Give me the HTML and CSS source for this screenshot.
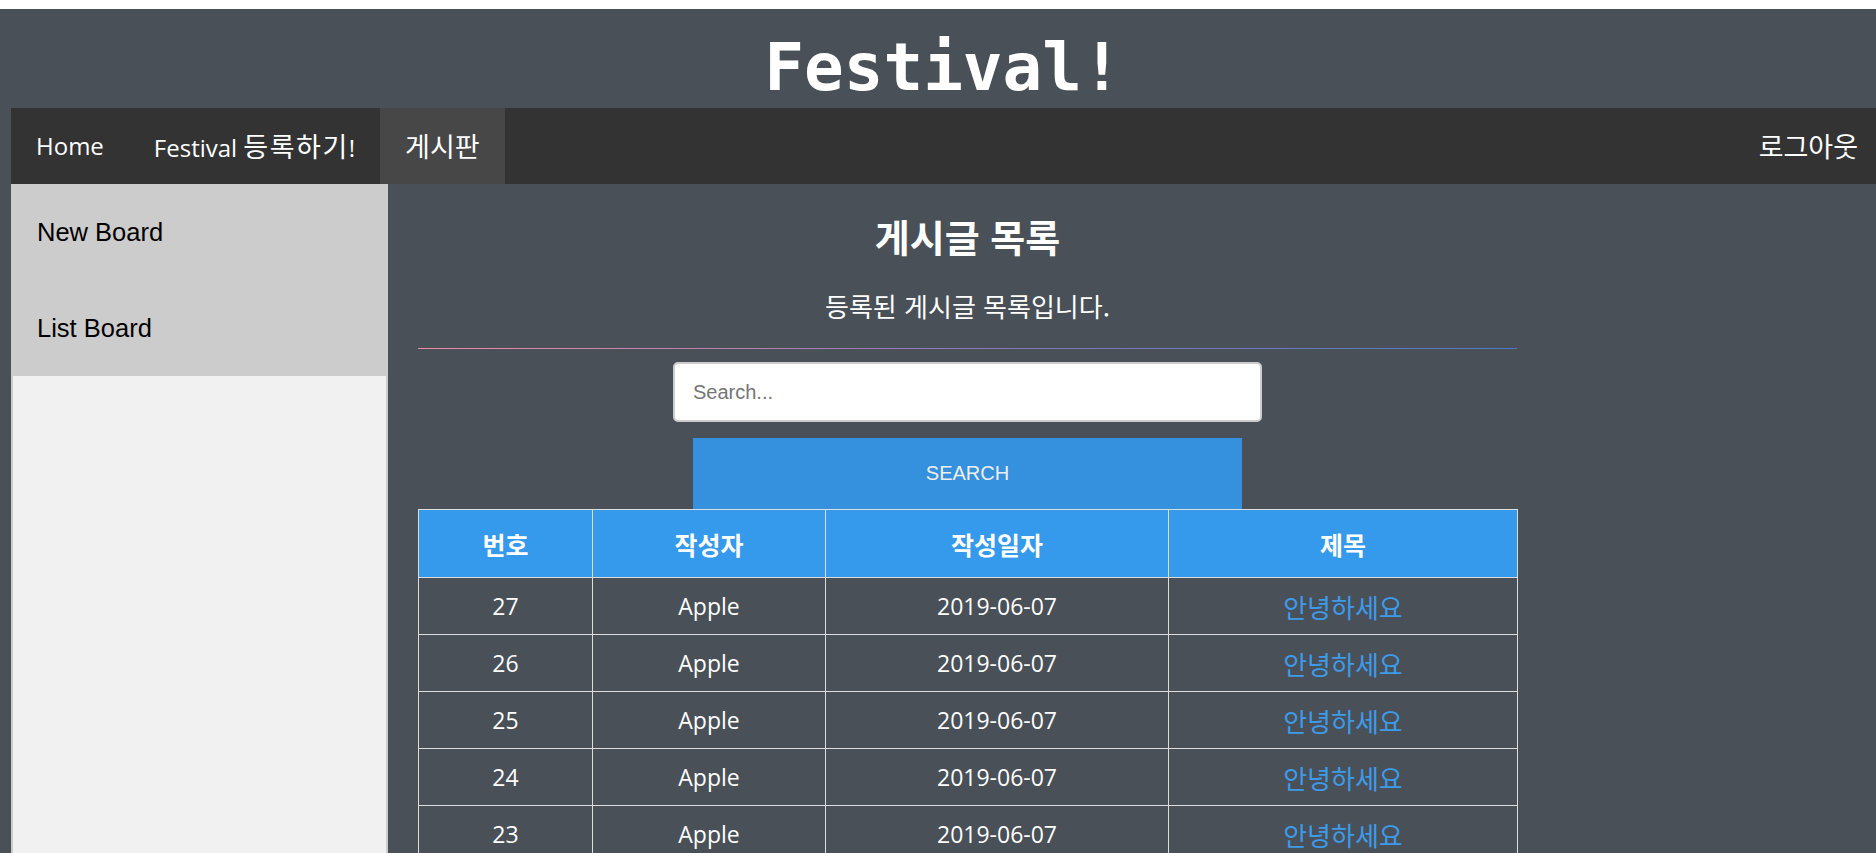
FILE: index.html
```html
<!DOCTYPE html>
<html lang="ko">
<head>
<meta charset="utf-8">
<title>Festival!</title>
<link rel="stylesheet" href="styles.css">
</head>
<body>
<div class="page">
  <header class="site-header">
    <h1 class="site-title">Festival!</h1>
  </header>
  <nav class="topnav">
    <a class="nav-item" href="#">Home</a>
    <a class="nav-item" href="#">Festival <span class="ko spaced">등록하기</span>!</a>
    <a class="nav-item active" href="#"><span class="ko">게시판</span></a>
    <a class="nav-item logout" href="#"><span class="ko">로그아웃</span></a>
  </nav>
  <div class="layout">
    <aside class="sidebar">
      <a class="side-item" href="#">New Board</a>
      <a class="side-item" href="#">List Board</a>
    </aside>
    <main class="content">
      <h2 class="board-title">게시글 목록</h2>
      <p class="board-sub">등록된 게시글 목록입니다.</p>
      <hr class="divider">
      <form class="search">
        <input class="search-input" type="text" placeholder="Search...">
        <button class="search-btn" type="button">SEARCH</button>
      </form>
      <table class="board">
        <thead>
          <tr>
            <th class="c-no">번호</th>
            <th class="c-writer">작성자</th>
            <th class="c-date">작성일자</th>
            <th class="c-title">제목</th>
          </tr>
        </thead>
        <tbody>
          <tr><td>27</td><td>Apple</td><td>2019-06-07</td><td><a href="#" class="post-link">안녕하세요</a></td></tr>
          <tr><td>26</td><td>Apple</td><td>2019-06-07</td><td><a href="#" class="post-link">안녕하세요</a></td></tr>
          <tr><td>25</td><td>Apple</td><td>2019-06-07</td><td><a href="#" class="post-link">안녕하세요</a></td></tr>
          <tr><td>24</td><td>Apple</td><td>2019-06-07</td><td><a href="#" class="post-link">안녕하세요</a></td></tr>
          <tr><td>23</td><td>Apple</td><td>2019-06-07</td><td><a href="#" class="post-link">안녕하세요</a></td></tr>
          <tr><td>22</td><td>Apple</td><td>2019-06-07</td><td><a href="#" class="post-link">안녕하세요</a></td></tr>
        </tbody>
      </table>
    </main>
  </div>
</div>
</body>
</html>
```
FILE: styles.css
```css
html, body {
  margin: 0;
  padding: 0;
  background: #ffffff;
}

.page {
  margin-top: 9px;
  padding-left: 11px;
  background: #495057;
  min-height: 844px;
  font-family: "Open Sans", "Noto Sans CJK KR", sans-serif;
}

.site-header {
  height: 99px;
  margin-left: -11px;
  display: flex;
  align-items: center;
  justify-content: center;
}

.site-title {
  margin: 0;
  font-family: "DejaVu Sans Mono", monospace;
  font-weight: bold;
  font-size: 66px;
  line-height: 1;
  color: #ffffff;
  padding-top: 18px;
  padding-left: 10px;
}

.topnav {
  display: flex;
  height: 76px;
  background: #333333;
}

.nav-item {
  display: block;
  padding: 0 25px;
  line-height: 76px;
  font-size: 24px;
  color: #ffffff;
  text-decoration: none;
  white-space: nowrap;
}

.ko {
  font-family: "Noto Sans CJK KR", sans-serif;
  font-size: 27px;
}

.ko.spaced {
  letter-spacing: 1.5px;
}

.nav-item.active {
  background: #474747;
}

.nav-item.logout {
  margin-left: auto;
  padding-right: 18px;
}

.layout {
  display: flex;
  align-items: flex-start;
}

.sidebar {
  width: 377px;
  flex: none;
  box-sizing: border-box;
  min-height: 700px;
  background: #f1f1f1;
  border: 2px solid #cccccc;
  border-top: 0;
  display: flex;
  flex-direction: column;
}

.side-item {
  display: block;
  margin: 0 -2px;
  padding: 33px 26px;
  line-height: 30px;
  background: #cccccc;
  color: #000000;
  text-decoration: none;
  font-family: "Liberation Sans", Arial, sans-serif;
  font-size: 25.5px;
}

.content {
  width: 1099px;
  margin-left: 30px;
  text-align: center;
  color: #ffffff;
}

.board-title {
  margin: 30px 0 0;
  font-family: "Noto Sans CJK KR", sans-serif;
  font-size: 38px;
  line-height: 44px;
  font-weight: bold;
}

.board-sub {
  margin: 33px 0 0;
  font-family: "Noto Sans CJK KR", sans-serif;
  font-size: 26px;
  line-height: 30px;
}

.divider {
  margin: 27px 0 0;
  border: 0;
  height: 1px;
  background: linear-gradient(to right, #f08aa4, #8a7ab8, #4f78c8);
}

.search {
  display: flex;
  flex-direction: column;
  align-items: center;
}

.search-input {
  margin-top: 13px;
  width: 589px;
  height: 60px;
  box-sizing: border-box;
  border: 2px solid #cccccc;
  border-radius: 5px;
  padding: 0 18px;
  font-family: "Liberation Sans", Arial, sans-serif;
  font-size: 20px;
  color: #333333;
  background: #ffffff;
}

.search-input::placeholder {
  color: #757575;
}

.search-btn {
  margin-top: 16px;
  width: 549px;
  height: 71px;
  border: 0;
  background: #3591de;
  color: #eeeeee;
  font-family: "Liberation Sans", Arial, sans-serif;
  font-size: 20px;
}

.board {
  width: 1099px;
  border-collapse: collapse;
  table-layout: fixed;
}

.board th,
.board td {
  border: 1px solid #dddddd;
  text-align: center;
  padding: 0;
}

.board th {
  height: 67px;
  background: #3599ec;
  color: #ffffff;
  font-family: "Noto Sans CJK KR", sans-serif;
  font-size: 25px;
  font-weight: bold;
}

.board td {
  height: 56px;
  font-size: 23px;
  color: #ffffff;
}

.c-no { width: 173px; }
.c-writer { width: 232px; }
.c-date { width: 342px; }
.c-title { width: 348px; }

.post-link {
  color: #3d9be9;
  text-decoration: none;
  font-family: "Noto Sans CJK KR", sans-serif;
  font-size: 26px;
}
```
